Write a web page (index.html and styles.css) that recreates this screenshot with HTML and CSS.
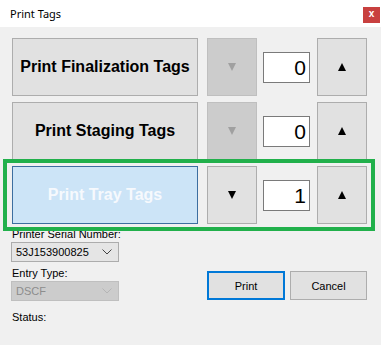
FILE: index.html
```html
<!DOCTYPE html>
<html>
<head>
<meta charset="utf-8">
<link rel="stylesheet" href="styles.css">
</head>
<body>
<div class="window">
  <div class="titlebar">
    <span class="title">Print Tags</span>
    <span class="close">x</span>
  </div>
  <div class="content">
    <div class="rows">
      <div class="bigbtn">Print Finalization Tags</div>
      <div class="spin disabled"><span class="tri down"></span></div>
      <div class="num">0</div>
      <div class="spin"><span class="tri up"></span></div>

      <div class="bigbtn">Print Staging Tags</div>
      <div class="spin disabled"><span class="tri down"></span></div>
      <div class="num">0</div>
      <div class="spin"><span class="tri up"></span></div>

      <div class="bigbtn active">Print Tray Tags</div>
      <div class="spin"><span class="tri down"></span></div>
      <div class="num">1</div>
      <div class="spin"><span class="tri up"></span></div>
    </div>
    <div class="lower">
      <div class="fields">
        <div class="label">Printer Serial Number:</div>
        <div class="combo"><span>53J153900825</span><svg class="chev" width="10" height="6" viewBox="0 0 10 6"><path d="M0.5 0.5 L5 5 L9.5 0.5" fill="none" stroke="#444" stroke-width="1"/></svg></div>
        <div class="label second">Entry Type:</div>
        <div class="combo off"><span>DSCF</span><svg class="chev" width="10" height="6" viewBox="0 0 10 6"><path d="M0.5 0.5 L5 5 L9.5 0.5" fill="none" stroke="#b5b5b5" stroke-width="1"/></svg></div>
        <div class="label status">Status:</div>
      </div>
      <div class="actions">
        <div class="btn primary">Print</div>
        <div class="btn">Cancel</div>
      </div>
    </div>
    <div class="highlight"></div>
  </div>
</div>
</body>
</html>
```

FILE: styles.css
```css
* { box-sizing: border-box; }
html, body { margin: 0; padding: 0; }
body {
  width: 381px;
  height: 345px;
  overflow: hidden;
  font-family: "Liberation Sans", Arial, sans-serif;
  background: #f0f0f0;
}
.window {
  width: 381px;
  height: 345px;
  display: flex;
  flex-direction: column;
}
.titlebar {
  height: 27px;
  background: #ffffff;
  display: flex;
  align-items: flex-start;
  justify-content: space-between;
  flex: none;
}
.title {
  font-family: "Noto Sans", "Open Sans", sans-serif;
  font-size: 11px;
  color: #000;
  margin-left: 10px;
  margin-top: 6px;
}
.close {
  width: 17px;
  height: 16px;
  margin-top: 7px;
  margin-right: 1px;
  background: #c8403f;
  color: #fff;
  font-size: 10px;
  font-weight: bold;
  display: flex;
  align-items: center;
  justify-content: center;
  line-height: 1;
  padding-bottom: 2px;
}
.content {
  position: relative;
  flex: 1;
  background: #f0f0f0;
  padding: 11px 0 0 12px;
}
.rows {
  display: grid;
  grid-template-columns: 195px 56px 54px 50px;
  grid-auto-rows: 58px;
  row-gap: 6px;
}
.bigbtn {
  width: 186px;
  background: #e1e1e1;
  border: 1px solid #adadad;
  display: flex;
  align-items: center;
  justify-content: center;
  font-weight: bold;
  font-size: 16px;
  color: #000;
}
.bigbtn.active {
  background: #cce4f7;
  border: 1px solid #3c6ea0;
  color: #f6f9fd;
}
.spin {
  width: 50px;
  background: #e1e1e1;
  border: 1px solid #adadad;
  display: flex;
  align-items: center;
  justify-content: center;
}
.spin.disabled {
  background: #cccccc;
  border-color: #bfbfbf;
}
.tri {
  width: 0;
  height: 0;
  border-left: 4px solid transparent;
  border-right: 4px solid transparent;
}
.tri.up { border-bottom: 8px solid #000; }
.tri.down { border-top: 8px solid #000; }
.spin.disabled .tri.down { border-top-color: #a0a0a0; }
.num {
  width: 47px;
  align-self: center;
  height: 31px;
  background: #fff;
  border: 1px solid #7a7a7a;
  font-size: 21px;
  text-align: right;
  padding-right: 3px;
  line-height: 29px;
  color: #000;
}
.lower {
  display: flex;
  margin-left: -1px;
  margin-top: 4px;
}
.fields {
  width: 196px;
  display: flex;
  flex-direction: column;
}
.label {
  font-size: 11px;
  line-height: 13px;
  color: #000;
  margin-left: 1px;
}
.label.second { margin-top: 5px; }
.label.status { margin-top: 10px; }
.combo {
  margin-top: 1px;
  width: 108px;
  height: 20px;
  background: #e5e5e5;
  border: 1px solid #acacac;
  display: flex;
  align-items: center;
  justify-content: space-between;
  padding: 0 6px 0 4px;
  font-size: 11px;
  color: #000;
}
.combo.off {
  background: #cccccc;
  border-color: #bfbfbf;
  color: #8d8d8d;
}
.actions {
  display: flex;
  gap: 5px;
  margin-top: 43px;
  align-self: flex-start;
}
.btn {
  width: 77px;
  height: 29px;
  background: #e1e1e1;
  border: 1px solid #adadad;
  display: flex;
  align-items: center;
  justify-content: center;
  font-size: 11px;
  color: #000;
}
.btn.primary {
  width: 78px;
  border: 2px solid #0078d7;
}
.highlight {
  position: absolute;
  left: 3px;
  top: 132px;
  width: 372px;
  height: 72px;
  border: 4px solid #21b04b;
  pointer-events: none;
}
```
